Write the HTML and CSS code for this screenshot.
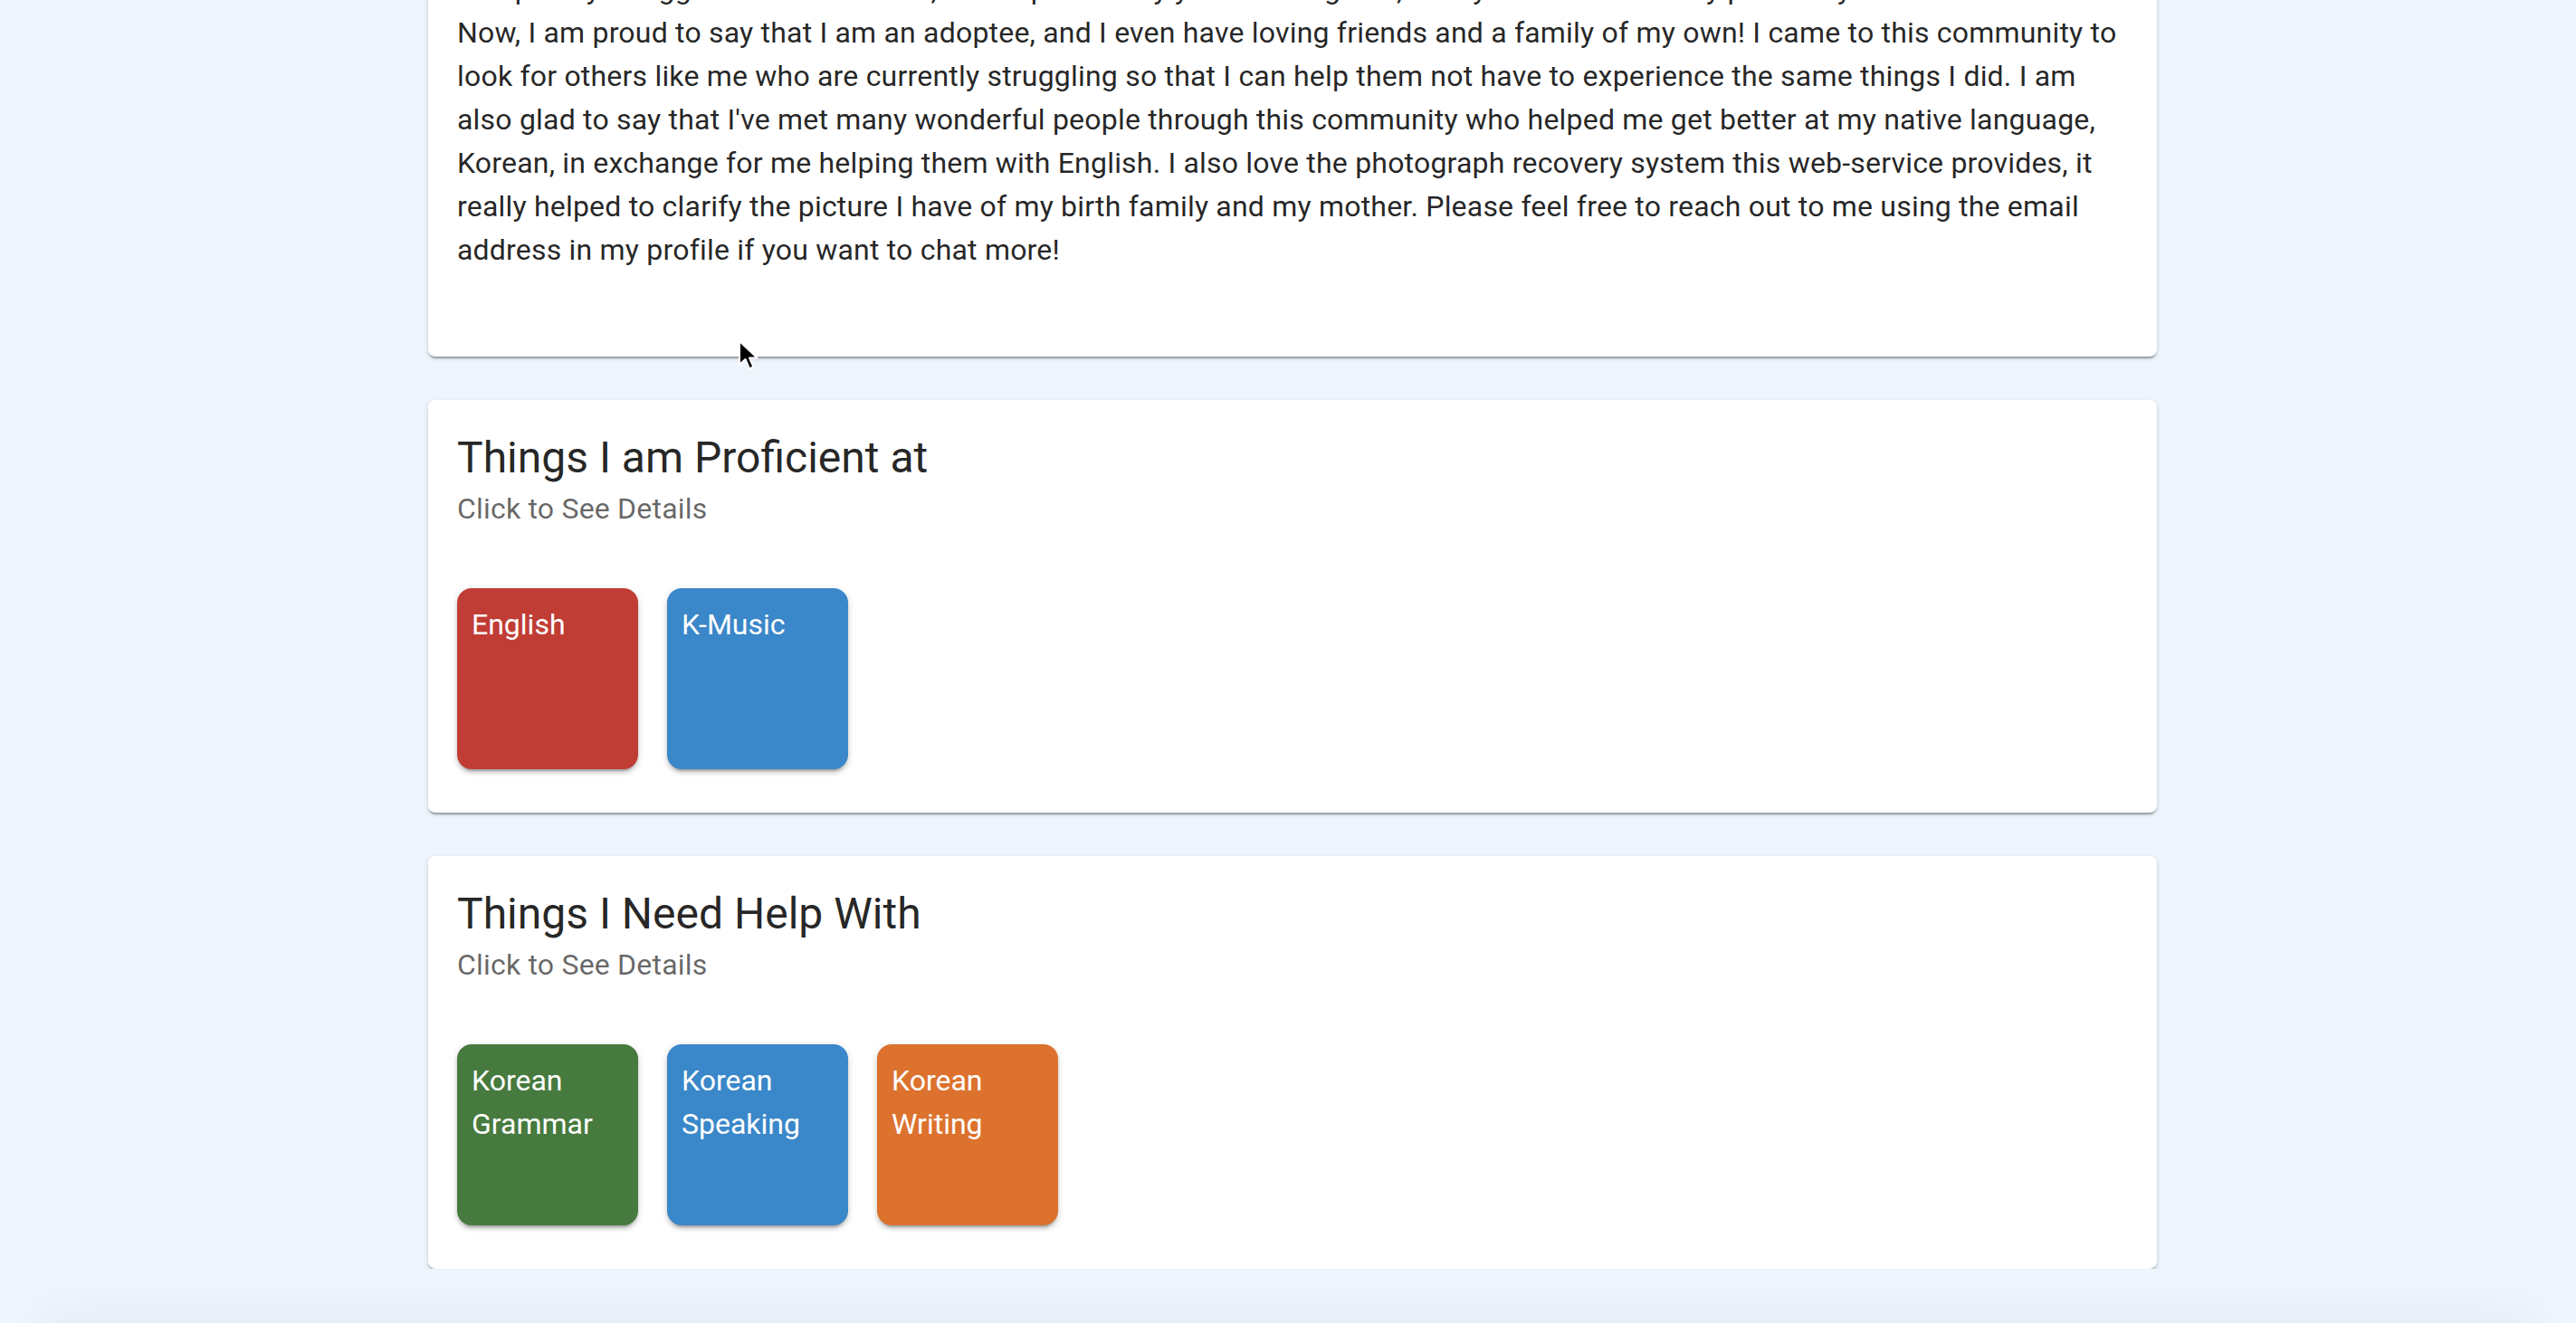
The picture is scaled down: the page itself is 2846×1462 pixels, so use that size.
FILE: index.html
```html
<!DOCTYPE html>
<html lang="en">
<head>
<meta charset="utf-8">
<title>Profile</title>
<link rel="stylesheet" href="styles.css">
</head>
<body>
<main class="page">
  <section class="card">
    <div class="card-content about">
      <p class="body-text">completely struggled with who I was, and I spent many years feeling lost, lonely and unsure of my place anywhere.</p>
      <p class="body-text">Now, I am proud to say that I am an adoptee, and I even have loving friends and a family of my own! I came to this community to<br>look for others like me who are currently struggling so that I can help them not have to experience the same things I did. I am<br>also glad to say that I've met many wonderful people through this community who helped me get better at my native language,<br>Korean, in exchange for me helping them with English. I also love the photograph recovery system this web-service provides, it<br>really helped to clarify the picture I have of my birth family and my mother. Please feel free to reach out to me using the email<br>address in my profile if you want to chat more!</p>
    </div>
  </section>

  <section class="card">
    <div class="card-content">
      <h2 class="card-title">Things I am Proficient at</h2>
      <p class="card-subtitle">Click to See Details</p>
      <div class="tiles">
        <div class="tile tile-red">English</div>
        <div class="tile tile-blue">K-Music</div>
      </div>
    </div>
  </section>

  <section class="card">
    <div class="card-content">
      <h2 class="card-title">Things I Need Help With</h2>
      <p class="card-subtitle">Click to See Details</p>
      <div class="tiles">
        <div class="tile tile-green">Korean Grammar</div>
        <div class="tile tile-blue">Korean Speaking</div>
        <div class="tile tile-orange">Korean Writing</div>
      </div>
    </div>
  </section>
</main>

<div class="bottom-bar"></div>

<svg class="cursor" width="24" height="36" viewBox="0 0 24 36" aria-hidden="true">
  <path d="M2 2 L2 28 L8.5 22 L13 32.5 L17.5 30.5 L13 20.5 L21.5 20.5 Z" fill="#000" stroke="#fff" stroke-width="2" stroke-linejoin="round"/>
</svg>
</body>
</html>
```

FILE: styles.css
```css
* {
  box-sizing: border-box;
}

html, body {
  margin: 0;
  padding: 0;
}

body {
  background: #eff5fd;
  font-family: Roboto, "Liberation Sans", Arial, sans-serif;
  color: rgba(0, 0, 0, 0.87);
  padding-left: 10px;
}

.page {
  width: 1910px;
  margin: -68px auto 0;
  display: flex;
  flex-direction: column;
  gap: 48px;
}

.card {
  background: #fff;
  border-radius: 8px;
  box-shadow: 0 4px 2px -2px rgba(0, 0, 0, 0.2),
              0 2px 2px 0 rgba(0, 0, 0, 0.14),
              0 2px 6px 0 rgba(0, 0, 0, 0.12);
  overflow: hidden;
}

.card-content {
  padding: 32px 32px 48px;
}

.about {
  padding-bottom: 94px;
}

.body-text {
  margin: 0;
  font-size: 32px;
  line-height: 48px;
  font-weight: 400;
  letter-spacing: 0.2px;
  white-space: nowrap;
}

.card-title {
  margin: 0;
  font-size: 48px;
  line-height: 64px;
  font-weight: 400;
}

.card-subtitle {
  margin: 0;
  font-size: 32px;
  line-height: 48px;
  color: rgba(0, 0, 0, 0.6);
  letter-spacing: 0.2px;
}

.tiles {
  display: flex;
  gap: 32px;
  margin-top: 64px;
}

.tile {
  width: 200px;
  height: 200px;
  border-radius: 16px;
  padding: 16px;
  color: #fff;
  font-size: 32px;
  line-height: 48px;
  box-shadow: 0 6px 2px -4px rgba(0, 0, 0, 0.2),
              0 4px 4px 0 rgba(0, 0, 0, 0.14),
              0 2px 10px 0 rgba(0, 0, 0, 0.12);
}

.tile-red {
  background: #c03d36;
}

.tile-blue {
  background: #3a87c9;
}

.tile-green {
  background: #477a3e;
}

.tile-orange {
  background: #dc722e;
}

.bottom-bar {
  position: fixed;
  left: 60px;
  right: 60px;
  bottom: -120px;
  height: 120px;
  background: #e4eaf3;
  box-shadow: 0 0 50px 6px rgba(40, 70, 120, 0.07);
}

.cursor {
  position: absolute;
  left: 815px;
  top: 375px;
}
```
